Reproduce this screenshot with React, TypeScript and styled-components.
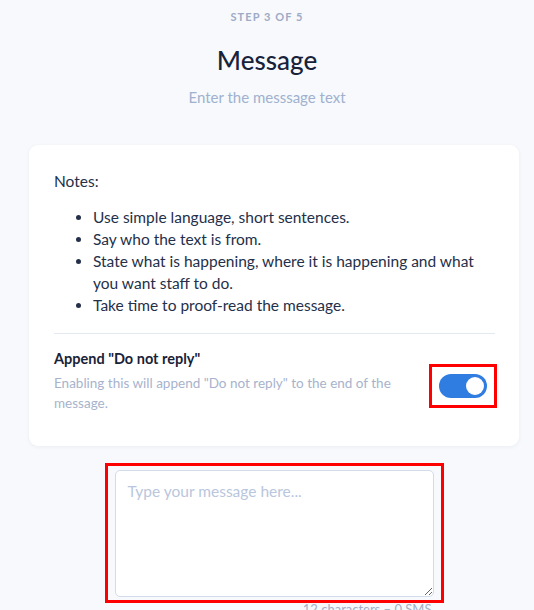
import React, { useState } from "react";
import styled, { createGlobalStyle } from "styled-components";

const GlobalStyle = createGlobalStyle`
  body {
    margin: 0;
    background: #f7f9fc;
    font-family: "Lato", "Noto Sans", sans-serif;
    color: #1c2740;
  }
`;

interface HighlightProps {
  padding: string;
  offset?: number;
}

interface ToggleProps {
  on: boolean;
}

export default function App() {
  const [appendReply, setAppendReply] = useState(true);
  const [text, setText] = useState("");

  return (
    <Page>
      <GlobalStyle />
      <Header>
        <Step>Step 3 of 5</Step>
        <Title>Message</Title>
        <Subtitle>Enter the messsage text</Subtitle>
      </Header>

      <Body>
        <Card>
          <Notes>Notes:</Notes>
          <List>
            <li>Use simple language, short sentences.</li>
            <li>Say who the text is from.</li>
            <li>
              State what is happening, where it is happening and what you want
              staff to do.
            </li>
            <li>Take time to proof-read the message.</li>
          </List>
          <Divider />
          <OptionRow>
            <OptionText>
              <OptionTitle>Append "Do not reply"</OptionTitle>
              <OptionHint>
                Enabling this will append "Do not reply" to the end of the
                message.
              </OptionHint>
            </OptionText>
            <Highlight padding="7px" offset={15}>
              <Toggle
                on={appendReply}
                onClick={() => setAppendReply(!appendReply)}
                aria-label="Append do not reply"
              >
                <Knob on={appendReply} />
              </Toggle>
            </Highlight>
          </OptionRow>
        </Card>

        <Composer>
          <Highlight padding="4px 7px 3px">
            <TextArea
              placeholder="Type your message here..."
              value={text}
              onChange={(e) => setText(e.target.value)}
            />
          </Highlight>
          <Counter>12 characters – 0 SMS</Counter>
        </Composer>
      </Body>
    </Page>
  );
}

const Page = styled.div`
  display: flex;
  flex-direction: column;
`;

const Header = styled.header`
  padding-top: 10px;
  display: flex;
  flex-direction: column;
  align-items: center;
`;

const Body = styled.main`
  padding: 0 15px 0 29px;
  display: flex;
  flex-direction: column;
`;

const Step = styled.div`
  font-size: 11px;
  font-weight: 700;
  letter-spacing: 0.1em;
  text-transform: uppercase;
  color: #9eabc6;
  line-height: 13px;
`;

const Title = styled.h1`
  margin: 21px 0 0;
  font-size: 26px;
  font-weight: 500;
  line-height: 32px;
  color: #17223b;
`;

const Subtitle = styled.div`
  margin-top: 11px;
  font-size: 15px;
  line-height: 20px;
  color: #9fb1cf;
`;

const Card = styled.section`
  margin-top: 38px;
  background: #ffffff;
  border-radius: 9px;
  box-shadow: 0 1px 4px rgba(30, 50, 90, 0.06);
  padding: 26px 24px 33px 25px;
`;

const Notes = styled.div`
  font-size: 15.5px;
  line-height: 20px;
  color: #243049;
`;

const List = styled.ul`
  margin: 15px 0 0;
  padding-left: 39px;
  font-size: 15.5px;
  line-height: 22px;
  color: #243049;
`;

const Divider = styled.hr`
  margin: 17px 0 0;
  border: 0;
  border-top: 1px solid #e4e9f1;
`;

const OptionRow = styled.div`
  margin-top: 15px;
  display: flex;
  align-items: flex-start;
  justify-content: space-between;
  margin-right: -2px;
`;

const OptionText = styled.div`
  width: 345px;
`;

const OptionTitle = styled.div`
  font-size: 14.5px;
  font-weight: 700;
  line-height: 20px;
  color: #1a2236;
`;

const OptionHint = styled.div`
  margin-top: 4px;
  font-size: 13.5px;
  line-height: 20px;
  color: #a7b3cc;
`;

const Highlight = styled.div<HighlightProps>`
  border: 3px solid #ff0000;
  padding: ${({ padding }) => padding};
  margin-top: ${({ offset }) => offset ?? 0}px;
  display: flex;
`;

const Toggle = styled.button<ToggleProps>`
  width: 48px;
  height: 24px;
  border: 0;
  padding: 3px;
  border-radius: 12px;
  background: ${({ on }) => (on ? "#2f7de1" : "#cfd8e6")};
  display: flex;
  justify-content: ${({ on }) => (on ? "flex-end" : "flex-start")};
  cursor: pointer;
`;

const Knob = styled.span<ToggleProps>`
  width: 18px;
  height: 18px;
  border-radius: 50%;
  background: #ffffff;
`;

const Composer = styled.div`
  margin-top: 17px;
  align-self: center;
  display: flex;
  flex-direction: column;
  width: 339px;
`;

const TextArea = styled.textarea`
  box-sizing: border-box;
  width: 319px;
  height: 127px;
  border: 1px solid #d2dcea;
  border-radius: 5px;
  padding: 10px 12px;
  font-family: "Lato", "Noto Sans", sans-serif;
  font-size: 15.5px;
  line-height: 20px;
  color: #243049;
  background: #ffffff;
  outline: none;
  &::placeholder {
    color: #b9c6dd;
  }
`;

const Counter = styled.div`
  margin-top: -2px;
  padding-right: 12px;
  text-align: right;
  font-size: 13px;
  line-height: 16px;
  color: #a3b0c9;
`;
